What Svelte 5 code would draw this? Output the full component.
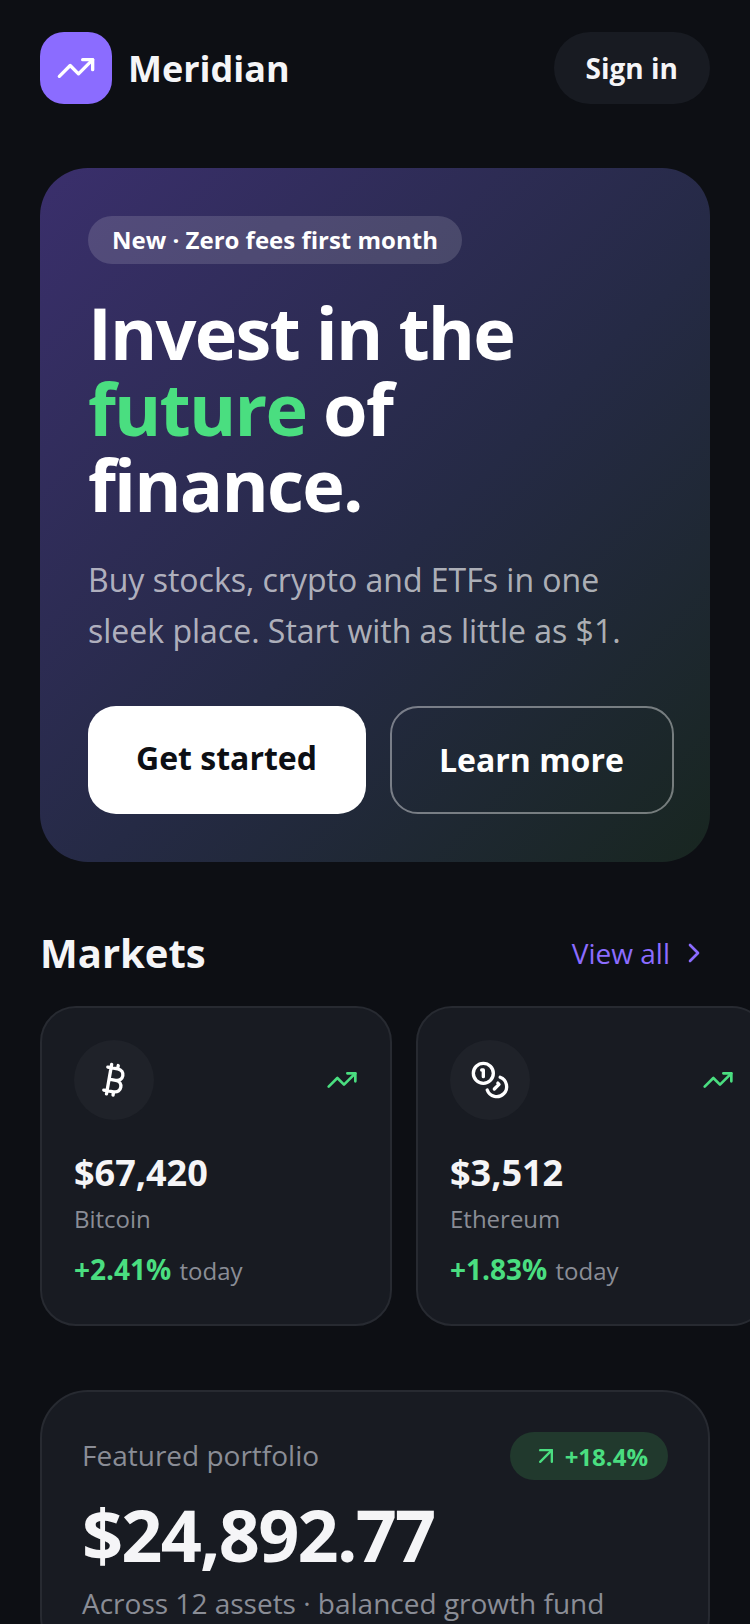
<script>
  const markets = [
    { icon: 'bitcoin', price: '$67,420', name: 'Bitcoin', change: '+2.41%' },
    { icon: 'coins', price: '$3,512', name: 'Ethereum', change: '+1.83%' },
    { icon: 'bitcoin', price: '$148', name: 'Solana', change: '+4.07%' },
  ];
</script>

{#snippet trend(size)}
  <svg width={size} height={size} viewBox="0 0 24 24" fill="none" stroke="currentColor" stroke-width="2" stroke-linecap="round" stroke-linejoin="round">
    <polyline points="22 7 13.5 15.5 8.5 10.5 2 17" />
    <polyline points="16 7 22 7 22 13" />
  </svg>
{/snippet}

<main class="page">
  <header class="top">
    <div class="brand">
      <div class="logo">{@render trend(40)}</div>
      <span class="brand-name">Meridian</span>
    </div>
    <button class="signin">Sign in</button>
  </header>

  <section class="hero">
    <span class="pill">New · Zero fees first month</span>
    <h1>Invest in the <em>future</em> of finance.</h1>
    <p>Buy stocks, crypto and ETFs in one sleek place. Start with as little as $1.</p>
    <div class="actions">
      <a class="btn primary" href="#start">Get started</a>
      <a class="btn ghost" href="#more">Learn more</a>
    </div>
  </section>

  <section class="markets">
    <div class="section-head">
      <h2>Markets</h2>
      <a class="view-all" href="#all">
        View all
        <svg width="32" height="32" viewBox="0 0 24 24" fill="none" stroke="currentColor" stroke-width="2" stroke-linecap="round" stroke-linejoin="round"><path d="m9 18 6-6-6-6" /></svg>
      </a>
    </div>
    <div class="scroller">
      {#each markets as m}
        <article class="card">
          <div class="card-top">
            <div class="coin">
              {#if m.icon === 'bitcoin'}
                <svg width="40" height="40" viewBox="0 0 24 24" fill="none" stroke="currentColor" stroke-width="2" stroke-linecap="round" stroke-linejoin="round"><path d="M11.767 19.089c4.924.868 6.14-6.025 1.216-6.894m-1.216 6.894L5.86 18.047m5.908 1.042-.347 1.97m1.563-8.864c4.924.869 6.14-6.025 1.215-6.893m-1.215 6.893-3.94-.694m5.155-6.2L8.29 4.26m5.908 1.042.348-1.97M7.48 20.364l3.126-17.727" /></svg>
              {:else}
                <svg width="40" height="40" viewBox="0 0 24 24" fill="none" stroke="currentColor" stroke-width="2" stroke-linecap="round" stroke-linejoin="round"><circle cx="8" cy="8" r="6" /><path d="M18.09 10.37A6 6 0 1 1 10.34 18" /><path d="M7 6h1v4" /><path d="m16.71 13.88.7.71-2.82 2.82" /></svg>
              {/if}
            </div>
            <span class="up">{@render trend(32)}</span>
          </div>
          <div class="price">{m.price}</div>
          <div class="name">{m.name}</div>
          <div class="change"><b>{m.change}</b> today</div>
        </article>
      {/each}
    </div>
  </section>

  <section class="portfolio">
    <div class="portfolio-head">
      <span class="label">Featured portfolio</span>
      <span class="gain">
        <svg width="28" height="28" viewBox="0 0 24 24" fill="none" stroke="currentColor" stroke-width="2" stroke-linecap="round" stroke-linejoin="round"><path d="M7 7h10v10" /><path d="M7 17 17 7" /></svg>
        +18.4%
      </span>
    </div>
    <div class="total">$24,892.77</div>
    <div class="sub">Across 12 assets · balanced growth fund</div>
  </section>
</main>

<style>
  :global(body) {
    background: #0d0f14;
  }

  .page {
    font-family: 'Open Sans', sans-serif;
    color: #f5f5f7;
    background: #0d0f14;
    padding: 32px 40px 64px;
    height: 1624px;
    box-sizing: border-box;
    overflow: hidden;
  }

  .top {
    display: flex;
    justify-content: space-between;
    align-items: center;
  }

  .brand {
    display: flex;
    align-items: center;
    gap: 16px;
  }

  .logo {
    width: 72px;
    height: 72px;
    border-radius: 24px;
    background: #8b6cff;
    color: #fff;
    display: flex;
    align-items: center;
    justify-content: center;
  }

  .brand-name {
    font-size: 36px;
    font-weight: 700;
  }

  .signin {
    height: 72px;
    padding: 0 32px;
    border: none;
    border-radius: 36px;
    background: #181b22;
    color: #f5f5f7;
    font: 700 28px 'Open Sans', sans-serif;
  }

  .hero {
    margin-top: 64px;
    padding: 48px;
    border-radius: 48px;
    background: linear-gradient(135deg, #3a2f6c 0%, #252a45 55%, #182620 100%);
  }

  .pill {
    display: inline-block;
    padding: 0 24px;
    height: 48px;
    line-height: 48px;
    border-radius: 24px;
    background: rgba(255, 255, 255, 0.14);
    color: #fff;
    font-size: 24px;
    font-weight: 700;
  }

  h1 {
    margin: 30px 0 0;
    font-size: 72px;
    line-height: 76px;
    font-weight: 700;
    letter-spacing: -1.8px;
    color: #fff;
  }

  h1 em {
    font-style: normal;
    color: #4ade80;
  }

  .hero p {
    margin: 32px 0 0;
    font-size: 32px;
    line-height: 51px;
    color: rgba(255, 255, 255, 0.65);
  }

  .actions {
    display: flex;
    gap: 24px;
    margin-top: 50px;
  }

  .btn {
    display: block;
    flex: none;
    padding: 30px 48px;
    border-radius: 28px;
    font-size: 32px;
    line-height: 44px;
    font-weight: 700;
    text-align: center;
    text-decoration: none;
  }

  .primary {
    padding-right: 49px;
    background: #fff;
    color: #0d0f14;
  }

  .ghost {
    padding-left: 47px;
    border: 2px solid rgba(255, 255, 255, 0.4);
    color: #fff;
  }

  .markets {
    margin-top: 63px;
  }

  .section-head {
    display: flex;
    justify-content: space-between;
    align-items: center;
  }

  h2 {
    margin: 0;
    font-size: 40px;
    font-weight: 700;
  }

  .view-all {
    display: flex;
    align-items: center;
    gap: 8px;
    color: #8b6cff;
    font-size: 28px;
    text-decoration: none;
  }

  .scroller {
    display: flex;
    gap: 24px;
    margin-top: 26px;
    margin-right: -40px;
    overflow: hidden;
  }

  .card {
    flex: 0 0 352px;
    box-sizing: border-box;
    padding: 32px 32px 36px;
    border: 2px solid #272a31;
    border-radius: 36px;
    background: #181b22;
  }

  .card-top {
    display: flex;
    justify-content: space-between;
    align-items: center;
  }

  .coin {
    width: 80px;
    height: 80px;
    border-radius: 50%;
    background: #1f2229;
    color: #fff;
    display: flex;
    align-items: center;
    justify-content: center;
  }

  .up {
    display: flex;
    color: #4ade80;
  }

  .price {
    margin-top: 28px;
    font-size: 36px;
    font-weight: 700;
  }

  .name {
    margin-top: 5px;
    font-size: 24px;
    color: #8a8d96;
  }

  .change {
    margin-top: 15px;
    font-size: 24px;
    color: #8a8d96;
  }

  .change b {
    margin-right: 2px;
    font-size: 28px;
    color: #4ade80;
  }

  .portfolio {
    margin-top: 64px;
    padding: 40px;
    border: 2px solid #272a31;
    border-radius: 48px;
    background: #181b22;
  }

  .portfolio-head {
    display: flex;
    justify-content: space-between;
    align-items: center;
  }

  .label {
    margin-bottom: 2px;
    font-size: 28px;
    color: #8a8d96;
  }

  .gain {
    display: flex;
    align-items: center;
    gap: 5px;
    height: 48px;
    padding: 0 20px 0 22px;
    border-radius: 24px;
    background: #21392d;
    color: #4ade80;
    font-size: 24px;
    font-weight: 700;
  }

  .total {
    margin-top: 12px;
    font-size: 72px;
    line-height: 84px;
    font-weight: 700;
    letter-spacing: -1.8px;
  }

  .sub {
    margin-top: 8px;
    font-size: 28px;
    color: #8a8d96;
  }
</style>
